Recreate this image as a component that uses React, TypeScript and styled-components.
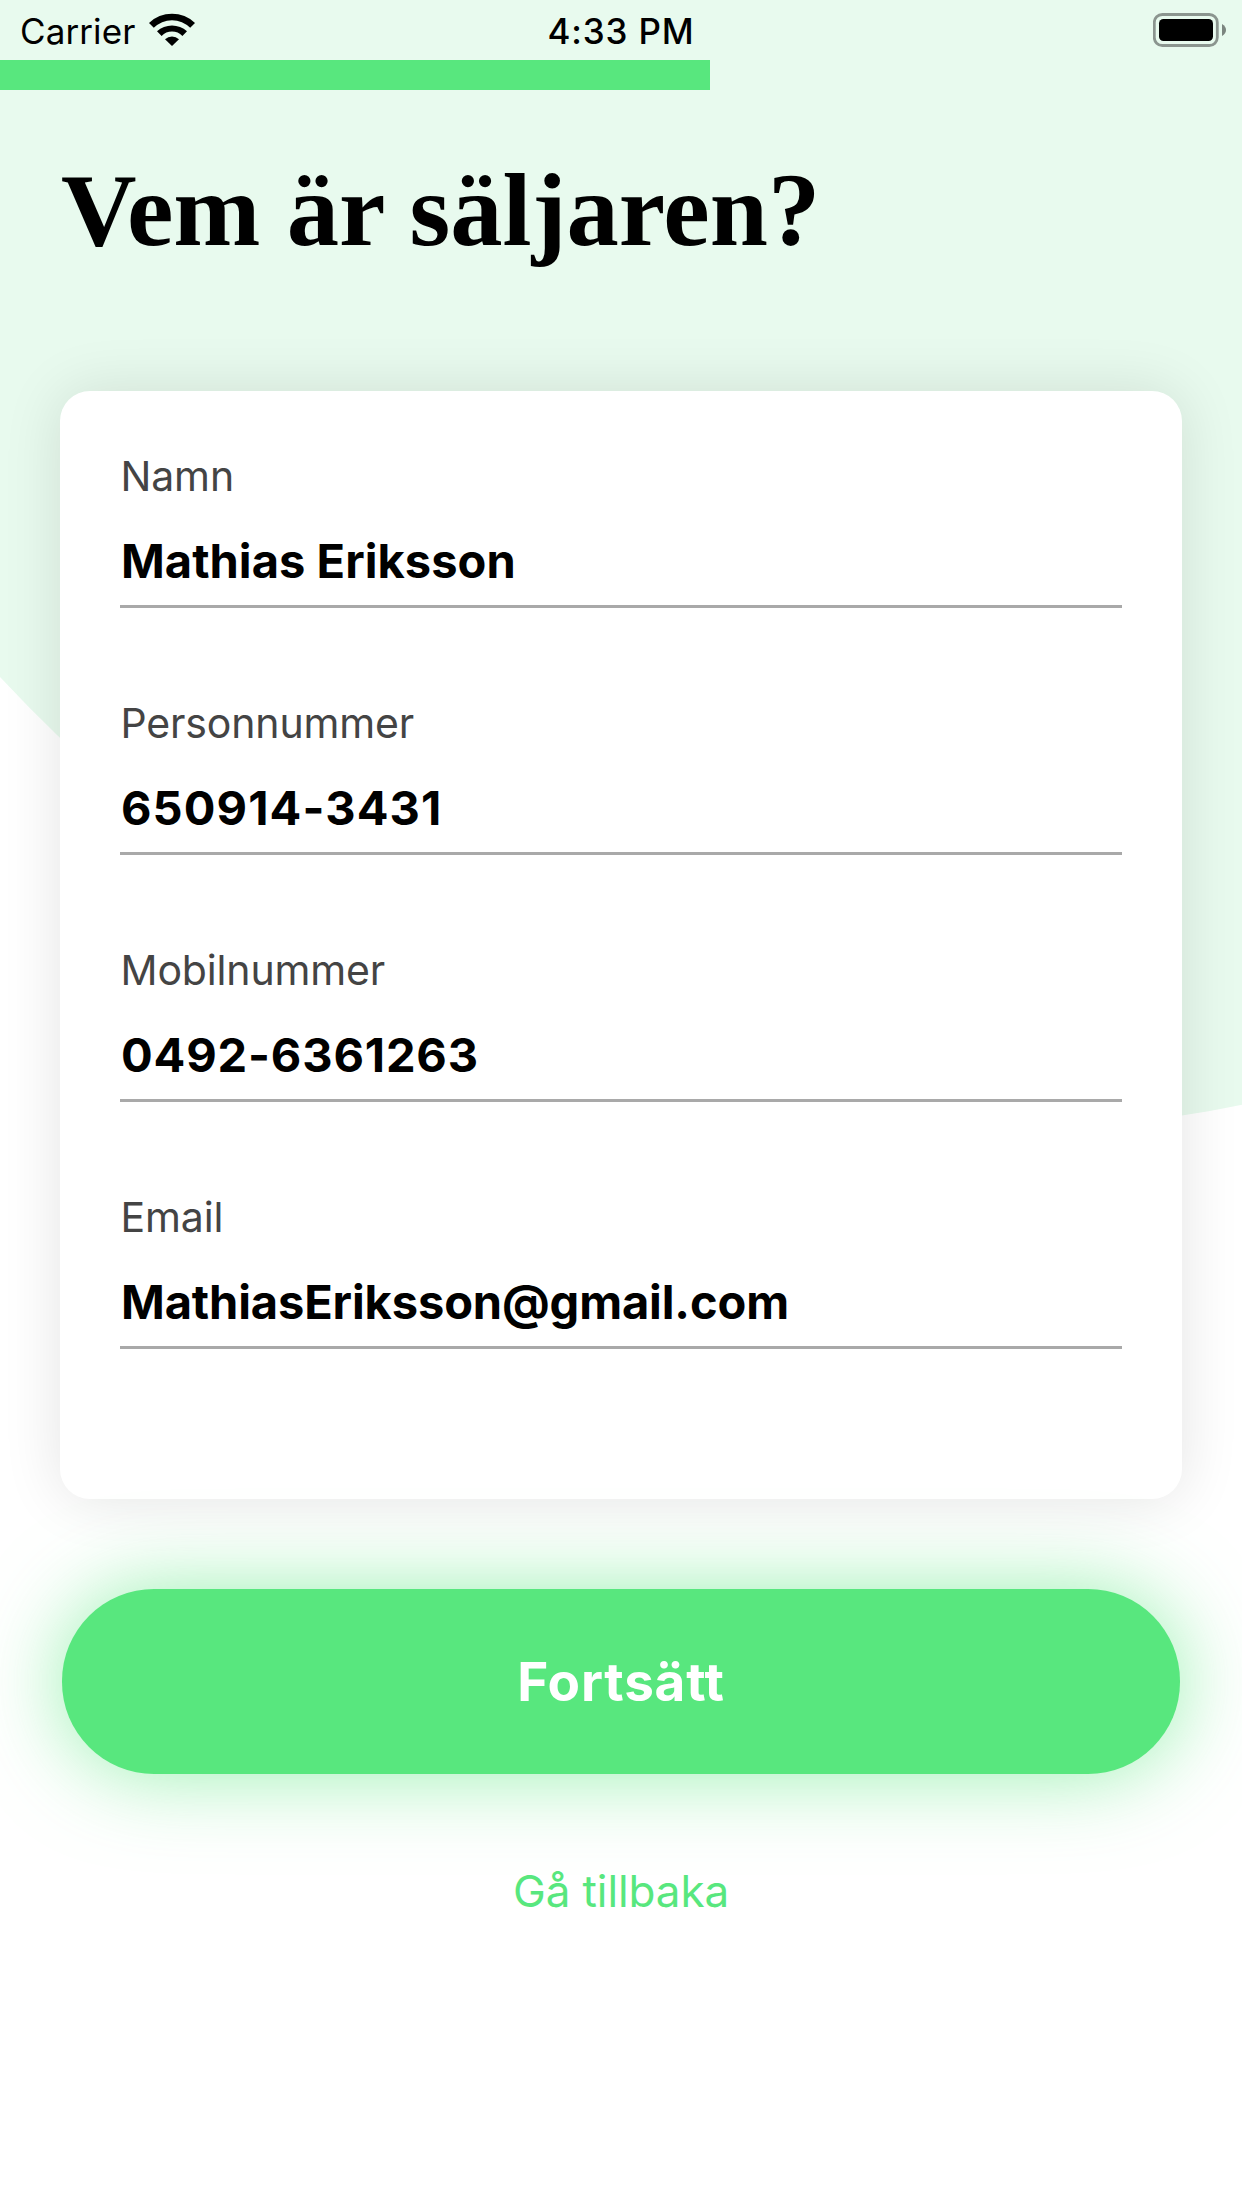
import React from "react";
import styled, { createGlobalStyle } from "styled-components";

const GlobalStyle = createGlobalStyle`
  * { box-sizing: border-box; }
  body {
    margin: 0;
    background: #fff;
    font-family: Inter, "Liberation Sans", sans-serif;
    color: #000;
  }
`;

const Screen = styled.main`
  position: relative;
  width: 1242px;
  height: 2208px;
  overflow: hidden;
  background: #fff;
  display: flex;
  flex-direction: column;
  isolation: isolate;
`;

const Backdrop = styled.div`
  position: absolute;
  z-index: -1;
  left: -483px;
  top: -2356px;
  width: 2950px;
  height: 3486px;
  border-radius: 50%;
  background: #e8faee;
`;

const StatusBar = styled.header`
  height: 60px;
  display: grid;
  grid-template-columns: 1fr auto 1fr;
  align-items: center;
  padding: 2px 16px 0;
  font-size: 35px;
  line-height: 44px;
`;

const Network = styled.div`
  display: flex;
  align-items: center;
  gap: 14px;
  padding-left: 4px;
`;

const Carrier = styled.span`
  letter-spacing: 0.1px;
`;

const Clock = styled.time`
  font-weight: 550;
  letter-spacing: 0.8px;
`;

const WifiIcon = styled.svg`
  width: 46px;
  height: 34px;
  margin-top: -4px;
`;

const BatteryIcon = styled.svg`
  justify-self: end;
  width: 73px;
  height: 34px;
  margin-top: -2px;
`;

const Progress = styled.div`
  height: 30px;
`;

const ProgressFill = styled.div<{ $width: number }>`
  width: ${(p) => p.$width}px;
  height: 100%;
  background: #58e77e;
`;

const Title = styled.h1`
  margin: 60px 60px 121px 61px;
  font-family: "Liberation Serif", serif;
  font-size: 104.6px;
  font-weight: 700;
  line-height: 120px;
  white-space: nowrap;
`;

const Card = styled.section`
  margin: 0 60px;
  padding: 60px;
  border-radius: 30px;
  background: #fff;
  box-shadow: 0 0 60px rgba(0, 0, 0, 0.11);
`;

const Field = styled.div`
  display: flex;
  flex-direction: column;
  gap: 30px;
  margin-bottom: 90px;
  padding-bottom: 14px;
  border-bottom: 3px solid #a9a9a9;
`;

const Label = styled.span`
  padding-left: 0.5px;
  font-size: 41px;
  line-height: 50px;
  color: #444;
  letter-spacing: -0.15px;
`;

const Value = styled.span<{ $spacing: number }>`
  padding-left: 1px;
  font-size: 47px;
  font-weight: 700;
  line-height: 60px;
  letter-spacing: ${(p) => p.$spacing}px;
`;

const Actions = styled.div`
  display: flex;
  flex-direction: column;
  align-items: center;
  gap: 87px;
  margin-top: 90px;
`;

const PrimaryButton = styled.button`
  width: 90%;
  height: 185px;
  border: 0;
  border-radius: 92px;
  background: #58e77e;
  box-shadow: 0 0 84px rgba(88, 231, 126, 0.62);
  color: #fff;
  font: 700 53px/60px Inter, "Liberation Sans", sans-serif;
  letter-spacing: 0.8px;
`;

const BackLink = styled.button`
  border: 0;
  padding: 0;
  background: none;
  color: #58e77e;
  font: 400 44px/60px Inter, "Liberation Sans", sans-serif;
  letter-spacing: -0.1px;
`;

const fields = [
  { label: "Namn", value: "Mathias Eriksson", spacing: 0.05 },
  { label: "Personnummer", value: "650914-3431", spacing: 1.1 },
  { label: "Mobilnummer", value: "0492-6361263", spacing: 0.85 },
  { label: "Email", value: "MathiasEriksson@gmail.com", spacing: -0.12 },
];

export default function App() {
  return (
    <Screen>
      <GlobalStyle />
      <Backdrop />
      <StatusBar>
        <Network>
          <Carrier>Carrier</Carrier>
          <WifiIcon viewBox="0 0 46 34">
            <path d="M0 11A33 33 0 0 1 46 11L41.2 15.8A25.5 25.5 0 0 0 4.8 15.8Z" />
            <path d="M8 19.2A22.3 22.3 0 0 1 38 19.2L33.4 23.9A14.7 14.7 0 0 0 12.6 23.9Z" />
            <path d="M16 27.2A10.6 10.6 0 0 1 30 27.2L23 34Z" />
          </WifiIcon>
        </Network>
        <Clock>4:33 PM</Clock>
        <BatteryIcon viewBox="0 0 73 34">
          <rect x="1.3" y="1.5" width="63" height="31" rx="8" fill="none" stroke="#8b958f" strokeWidth="2.8" />
          <rect x="6" y="6" width="54" height="22" rx="4.5" />
          <path d="M69 11Q73 13.5 73 17T69 23Z" fill="#7b857f" />
        </BatteryIcon>
      </StatusBar>
      <Progress>
        <ProgressFill $width={710} />
      </Progress>
      <Title>Vem är säljaren?</Title>
      <Card>
        {fields.map((f) => (
          <Field key={f.label}>
            <Label>{f.label}</Label>
            <Value $spacing={f.spacing}>{f.value}</Value>
          </Field>
        ))}
      </Card>
      <Actions>
        <PrimaryButton>Fortsätt</PrimaryButton>
        <BackLink>Gå tillbaka</BackLink>
      </Actions>
    </Screen>
  );
}
